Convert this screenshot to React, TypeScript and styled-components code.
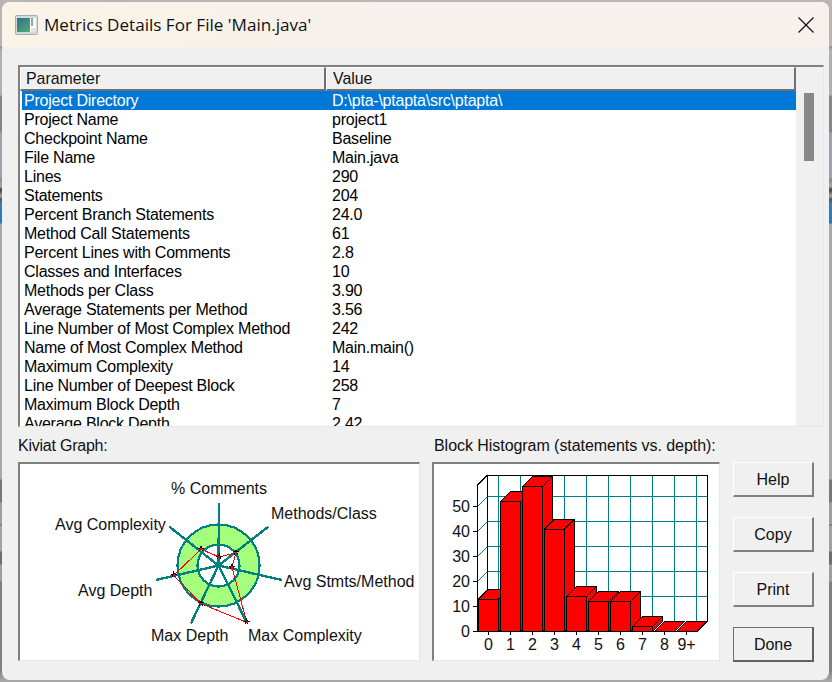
import React from "react";
import styled, { createGlobalStyle } from "styled-components";

const Global = createGlobalStyle`
  html, body { margin: 0; padding: 0; background: #b4b4b4; }
  body { font-family: "Liberation Sans", Arial, sans-serif; color: #000; }
`;
const Desktop = styled.div`
  width: 832px; height: 682px; box-sizing: border-box; padding: 2px 3px 2px 2px; overflow: hidden;
  background: linear-gradient(180deg,
    #b6b6b6 0, #b6b6b6 46px, #8e8e8e 47px, #b0b0b0 50px, #b0b0b0 95px, #868686 96px, #868686 132px,
    #9aa4b0 133px, #9aa4b0 178px, #8a8a8a 179px, #a8a8a8 186px, #404040 190px, #a8a8a8 196px, #555 199px,
    #3a7fb5 204px, #2a78c0 223px, #a8a8a8 224px, #a8a8a8 479px, #777 480px, #777 502px,
    #98a0aa 503px, #98a0aa 524px, #666 525px, #a2a2a2 526px, #a2a2a2 551px, #6e6e6e 552px, #6e6e6e 564px,
    #a0a0a0 565px, #94a0ac 571px, #94a0ac 581px, #808080 582px, #808080 670px, #a6a6a6 680px);
`;
const Window = styled.div`
  height: 100%; display: flex; flex-direction: column; background: #f0f0f0;
  border-radius: 8px; overflow: hidden;
`;
const TitleBar = styled.div`
  height: 45px; flex: none; display: flex; align-items: center; padding: 0 15px 0 13px; gap: 6px;
  background: linear-gradient(90deg, #f9f4e6 0%, #f8f0ec 45%, #f8f0ec 100%);
`;
const TitleText = styled.div`
  flex: 1; font-family: "Open Sans", sans-serif; font-size: 17.08px; color: #111; white-space: nowrap;
`;
const Content = styled.div`
  flex: 1; display: flex; flex-direction: column; padding: 18px 5px 0 16px; min-height: 0;
`;
const ListFrame = styled.div`
  height: 362px; flex: none; display: flex; box-sizing: border-box; overflow: hidden; background: #fff;
  border-style: solid; border-width: 2px 1px 1px 2px; border-color: #808080 #e6e6e6 #e6e6e6 #808080;
`;
const ListMain = styled.div`
  width: 776px; flex: none; display: flex; flex-direction: column; overflow: hidden;
`;
const Header = styled.div`
  display: grid; grid-template-columns: 306px 470px; height: 22px; flex: none; margin-bottom: 2px;
`;
const HeaderCell = styled.div<{ $inset: number }>`
  box-sizing: border-box; background: #f0f0f0; padding-left: ${(p) => p.$inset}px; font-size: 15.9px; line-height: 21px;
  border-style: solid; border-width: 1px 2px 2px 1px; border-color: #fff #707070 #707070 #fff; color: #111;
`;
const Row = styled.div<{ $selected?: boolean }>`
  display: grid; grid-template-columns: 308px 1fr; height: 19px; flex: none; margin-left: 2px; padding-left: 2px;
  font-size: 16px; letter-spacing: -0.23px; line-height: 19px; white-space: nowrap;
  background: ${(p) => (p.$selected ? "#0078d7" : "transparent")};
  color: ${(p) => (p.$selected ? "#fff" : "#000")};
`;
const ScrollTrack = styled.div`
  flex: 1; background: #f0f0f0; padding: 26px 9px 0 8px;
`;
const ScrollThumb = styled.div`
  height: 68px; background: #888;
`;
const Lower = styled.div`
  display: flex; gap: 12px;
`;
const Panel = styled.div<{ $w: number }>`
  width: ${(p) => p.$w}px; flex: none; display: flex; flex-direction: column;
`;
const Caption = styled.div<{ $spacing: number; $inset: number }>`
  height: 35px; font-size: 16px; letter-spacing: ${(p) => p.$spacing}px; line-height: 38px; color: #111; white-space: nowrap;
  padding-left: ${(p) => p.$inset}px;
`;
const ChartFrame = styled.div`
  height: 199px; box-sizing: border-box; background: #fff; overflow: hidden;
  border-style: solid; border-width: 2px 1px 1px 2px; border-color: #808080 #e6e6e6 #e6e6e6 #808080;
  svg { display: block; }
  text { font-family: "Liberation Sans", Arial, sans-serif; font-size: 16px; fill: #111; }
`;
const Buttons = styled.div`
  display: flex; flex-direction: column; gap: 20px; margin: 35px 0 0 1px;
`;
const Btn = styled.button<{ $def?: boolean }>`
  width: 81px; height: 35px; box-sizing: border-box; padding: 2px 0 0; background: #f0f0f0; color: #111;
  font-family: "Liberation Sans", Arial, sans-serif; font-size: 16px;
  border-style: solid; border-width: 1px 2px 2px 1px;
  border-color: ${(p) => (p.$def ? "#707070 #606060 #606060 #707070" : "#fff #808080 #808080 #fff")};
`;

const rows: [string, string][] = [
  ["Project Directory", "D:\\pta-\\ptapta\\src\\ptapta\\"],
  ["Project Name", "project1"],
  ["Checkpoint Name", "Baseline"],
  ["File Name", "Main.java"],
  ["Lines", "290"],
  ["Statements", "204"],
  ["Percent Branch Statements", "24.0"],
  ["Method Call Statements", "61"],
  ["Percent Lines with Comments", "2.8"],
  ["Classes and Interfaces", "10"],
  ["Methods per Class", "3.90"],
  ["Average Statements per Method", "3.56"],
  ["Line Number of Most Complex Method", "242"],
  ["Name of Most Complex Method", "Main.main()"],
  ["Maximum Complexity", "14"],
  ["Line Number of Deepest Block", "258"],
  ["Maximum Block Depth", "7"],
  ["Average Block Depth", "2.42"],
];

const TEAL = "#008080";

function AppIcon() {
  return (
    <svg width="23" height="20" viewBox="0 0 23 20">
      <defs>
        <linearGradient id="ic" x1="0" y1="0" x2="1" y2="1">
          <stop offset="0" stopColor="#2a6f90" />
          <stop offset="1" stopColor="#58ad70" />
        </linearGradient>
      </defs>
      <rect x="0.5" y="0.5" width="22" height="19" rx="1" fill="#d4d8d8" stroke="#a8aeb0" />
      <rect x="2" y="3" width="19" height="14" fill="#fff" />
      <rect x="2" y="3" width="13" height="14" fill="url(#ic)" />
      <rect x="16" y="3" width="2" height="8" fill="#7fb0b0" />
      <rect x="16" y="13" width="5" height="4" fill="#e0e4e4" />
    </svg>
  );
}

function Kiviat() {
  const ox = 20, oy = 464;
  const cx = 218.5 - ox, cy = 565.5 - oy;
  const spokes = [[219, 502.7], [268.3, 526.7], [281.7, 580], [246.7, 622.3], [191, 623.3], [156, 580], [169.3, 526.7]];
  const pts = [[219.3, 557], [236, 552.7], [232, 567], [246.7, 622.3], [201, 603.7], [173.7, 575.3], [201, 549.3]];
  const labels: [string, number, number][] = [
    ["% Comments", 171, 494], ["Methods/Class", 271, 519], ["Avg Complexity", 55, 530],
    ["Avg Stmts/Method", 284, 587], ["Avg Depth", 78, 596], ["Max Depth", 151, 641], ["Max Complexity", 248, 641],
  ];
  return (
    <svg width="400" height="196" viewBox="0 0 400 196" shapeRendering="crispEdges">
      <circle cx={cx} cy={cy} r={41} fill="#a6ff7c" stroke={TEAL} strokeWidth="2.2" />
      <circle cx={cx} cy={cy} r={21} fill="#fff" stroke={TEAL} strokeWidth="2.2" />
      {spokes.map(([x, y], i) => (
        <line key={i} x1={cx} y1={cy} x2={x - ox} y2={y - oy} stroke={TEAL} strokeWidth="2.4" />
      ))}
      <polygon points={pts.map(([x, y]) => `${x - ox},${y - oy}`).join(" ")} fill="none" stroke="#f00" strokeWidth="1" />
      {pts.map(([x, y], i) => (
        <g key={i} transform={`translate(${x - ox} ${y - oy})`}>
          <path d="M-3 -1H3M-1.5 2L0 -3L1.5 2" stroke="#000" strokeWidth="1" fill="none" />
          <rect x="-1" y="-1" width="2" height="2" fill="#f00" />
        </g>
      ))}
      {labels.map(([t, x, y]) => (
        <text key={t} x={x - ox} y={y - oy}>{t}</text>
      ))}
    </svg>
  );
}

function Histogram() {
  const ox = 434, oy = 464;
  const X = (x: number) => x - ox;
  const Y = (y: number) => y - oy;
  const values = [13, 52, 58, 41, 14, 12, 12, 2, 0, 0];
  const base = 631, d = 10, wallTop = 475;
  const xLabels = ["0", "1", "2", "3", "4", "5", "6", "7", "8", "9+"];
  return (
    <svg width="285" height="196" viewBox="0 0 285 196" shapeRendering="crispEdges">
      {[0, 1, 2, 3, 4].map((i) => {
        const y = 596.5 - 25 * i;
        return (
          <g key={i}>
            <line x1={X(487.5)} y1={Y(y)} x2={X(707.5)} y2={Y(y)} stroke={TEAL} />
            <line x1={X(477.5)} y1={Y(y + 10)} x2={X(487.5)} y2={Y(y)} stroke={TEAL} />
          </g>
        );
      })}
      {xLabels.map((_, i) => (
        <line key={i} x1={X(498.5 + 22 * i)} y1={Y(475)} x2={X(498.5 + 22 * i)} y2={Y(621)} stroke={TEAL} />
      ))}
      <path d={`M${X(487.5)} ${Y(621)}V${Y(475.5)}H${X(707.5)}V${Y(621.5)}`} fill="none" stroke="#000" />
      <path d={`M${X(477.5)} ${Y(485)}L${X(487.5)} ${Y(475)}`} fill="none" stroke="#000" />
      <path d={`M${X(477.5)} ${Y(485)}V${Y(631.5)}H${X(697.5)}L${X(707.5)} ${Y(621.5)}`} fill="none" stroke="#000" />
      {values.map((v, i) => {
        const x0 = 478.5 + 22 * i, x1 = x0 + 20, top = base + 0.5 - v * 2.5;
        const t = Math.max(top - d, wallTop + 0.5);
        const dx = top - t;
        return (
          <g key={i}>
            <path
              d={`M${X(x1)} ${Y(base + 0.5)}L${X(x1 + d)} ${Y(base + 0.5 - d)}V${Y(t)}H${X(x0 + dx)}L${X(x0)} ${Y(top)}V${Y(base + 0.5)}Z`}
              fill="#f00" stroke="#000" strokeWidth="1"
            />
            <path d={`M${X(x0)} ${Y(top)}H${X(x1)}L${X(x1 + dx)} ${Y(t)}M${X(x1)} ${Y(top)}V${Y(base + 0.5)}`} fill="none" stroke="#000" />
          </g>
        );
      })}
      {["0", "10", "20", "30", "40", "50"].map((t, i) => {
        const y = 631.5 - 25 * i;
        return (
          <g key={t}>
            <line x1={X(473)} y1={Y(y)} x2={X(478)} y2={Y(y)} stroke="#000" />
            <text x={X(470)} y={Y(y + 5)} textAnchor="end">{t}</text>
          </g>
        );
      })}
      {xLabels.map((t, i) => (
        <g key={t}>
          <line x1={X(488.5 + 22 * i)} y1={Y(631)} x2={X(488.5 + 22 * i)} y2={Y(635)} stroke="#000" />
          <text x={X(488.5 + 22 * i)} y={Y(650)} textAnchor="middle">{t}</text>
        </g>
      ))}
    </svg>
  );
}

export default function App() {
  return (
    <Desktop>
      <Global />
      <Window>
        <TitleBar>
          <AppIcon />
          <TitleText>Metrics Details For File 'Main.java'</TitleText>
          <svg width="16" height="16" viewBox="0 0 16 16">
            <path d="M0.5 0.5L15.5 15.5M15.5 0.5L0.5 15.5" stroke="#111" strokeWidth="1.2" fill="none" />
          </svg>
        </TitleBar>
        <Content>
          <ListFrame>
            <ListMain>
              <Header>
                <HeaderCell $inset={5}>Parameter</HeaderCell>
                <HeaderCell $inset={6}>Value</HeaderCell>
              </Header>
              {rows.map(([a, b], i) => (
                <Row key={a} $selected={i === 0}>
                  <span>{a}</span>
                  <span>{b}</span>
                </Row>
              ))}
            </ListMain>
            <ScrollTrack>
              <ScrollThumb />
            </ScrollTrack>
          </ListFrame>
          <Lower>
            <Panel $w={402}>
              <Caption $spacing={-0.23} $inset={0}>Kiviat Graph:</Caption>
              <ChartFrame><Kiviat /></ChartFrame>
            </Panel>
            <Panel $w={288}>
              <Caption $spacing={-0.05} $inset={2}>Block Histogram (statements vs. depth):</Caption>
              <ChartFrame><Histogram /></ChartFrame>
            </Panel>
            <Buttons>
              <Btn>Help</Btn>
              <Btn>Copy</Btn>
              <Btn>Print</Btn>
              <Btn $def>Done</Btn>
            </Buttons>
          </Lower>
        </Content>
      </Window>
    </Desktop>
  );
}
